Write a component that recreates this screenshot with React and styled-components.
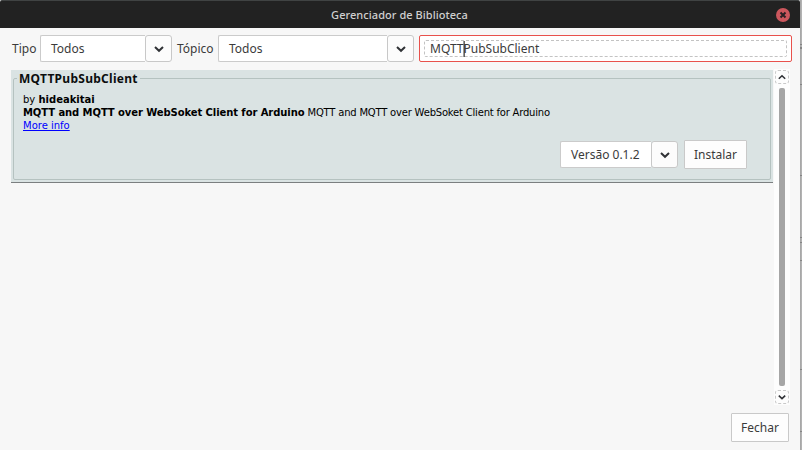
import React from 'react';
import styled, { createGlobalStyle } from 'styled-components';

const GlobalStyle = createGlobalStyle`
  * { box-sizing: border-box; }
  body { margin: 0; overflow: hidden; background: #b4b4b4; }
`;

const Desktop = styled.div`
  display: flex;
  width: 802px;
  height: 450px;
  background: #b4b4b4;
`;

const Backdrop = styled.div`
  display: flex;
  flex-direction: column;
  width: 2px;
  padding-top: 44px;
  background: linear-gradient(90deg, #a2a2a2, #b8b8b8);
`;

const BackdropMark = styled.span`
  height: ${({ $h }) => $h || 1}px;
  margin-bottom: ${({ $gap }) => $gap}px;
  background: #858585;
`;

const Window = styled.main`
  display: flex;
  flex-direction: column;
  width: 800px;
  height: 450px;
  background: #f7f7f7;
  color: #3b3b3b;
  font: 12px/16px "Noto Sans", sans-serif;
`;

const TitleBar = styled.header`
  display: grid;
  grid-template-columns: 28px 1fr 28px;
  align-items: center;
  height: 28px;
  border-top: 1px solid #404343;
  border-radius: 2px 2px 0 0;
  background: #222;
`;

const WindowTitle = styled.h1`
  grid-column: 2;
  margin: 0 1px 0 0;
  text-align: center;
  color: #d0d0d0;
  font-size: 11px;
  font-weight: 500;
  line-height: 16px;
  letter-spacing: 0.05px;
`;

const CloseButton = styled.button`
  display: flex;
  width: 14px;
  height: 14px;
  margin-left: 4px;
  padding: 0;
  border: 0;
  border-radius: 50%;
  background: #cc575d;
`;

const FilterBar = styled.div`
  display: flex;
  align-items: center;
  height: 42px;
  padding: 0 8px 1px 12px;
`;

const Label = styled.label`
  width: ${({ $w }) => $w}px;
  white-space: nowrap;
`;

const Combo = styled.div`
  display: flex;
  width: ${({ $w }) => $w}px;
  height: 27px;
  margin-right: ${({ $gap }) => $gap || 0}px;
`;

const ComboValue = styled.span`
  flex: 1;
  padding: 5px 0 0 10px;
  border: 1px solid #cbcbcb;
  border-right: 0;
  border-radius: 2px 0 0 2px;
  background: #fff;
  white-space: nowrap;
`;

const ComboArrow = styled.button`
  display: flex;
  align-items: center;
  justify-content: center;
  width: 27px;
  padding: 0;
  border: 1px solid #c8c8c8;
  border-radius: 3px;
  background: #fcfcfc;
`;

const SearchBox = styled.div`
  flex: 1;
  height: 27px;
  padding: 4px;
  border: 1px solid #e8514c;
  border-radius: 2px;
  background: #fff;
`;

const SearchText = styled.div`
  display: flex;
  height: 17px;
  padding-left: 5px;
  border: 1px dashed #c3c3c3;
  border-radius: 2px;
  line-height: 15px;
`;

const Caret = styled.span`
  width: 1px;
  height: 16px;
  margin: 0 -1px 0 0;
  background: #000;
  transform: translateX(0.6px);
`;

const Content = styled.section`
  display: flex;
  height: 336px;
  padding: 0 10px 0 11px;
`;

const LibraryList = styled.div`
  width: 762px;
  height: 335px;
`;

const LibraryCard = styled.article`
  height: 113px;
  padding: 0 2px 2px;
  border-bottom: 1px solid #7b7f80;
  background: #dae3e3;
`;

const LibraryFrame = styled.fieldset`
  display: flex;
  flex-direction: column;
  justify-content: space-between;
  min-width: 0;
  height: 110px;
  margin: 0;
  padding: 6px 23px 10px 9px;
  border: 1px solid #b5c2c0;
  border-radius: 2px;
`;

const LibraryName = styled.legend`
  margin-left: -6px;
  padding: 0 2px;
  color: #0b0e0e;
  font-size: 12px;
  font-weight: 700;
  line-height: 17px;
  letter-spacing: 0.27px;
`;

const Description = styled.div`
  color: #000;
  font: 10px/13px "DejaVu Sans", sans-serif;
  white-space: nowrap;

  p { margin: 0; }
  a { color: #00f; text-decoration: underline; }
`;

const Sentence = styled.p`
  letter-spacing: -0.2px;

  b { letter-spacing: -0.08px; }
`;

const Actions = styled.div`
  display: flex;
  align-items: center;
  justify-content: flex-end;
  gap: 6px;
`;

const Button = styled.button`
  width: ${({ $w }) => $w}px;
  height: 29px;
  padding: 1px 0 0;
  border: 1px solid #c9c9c9;
  border-radius: 1px;
  background: #fdfdfd;
  color: #3b3b3b;
  font: inherit;
`;

const ScrollBar = styled.div`
  display: flex;
  flex-direction: column;
  align-items: center;
  width: 16px;
  height: 336px;
  margin: -1px 0 0 1px;
  background: #fdfdfd;
`;

const ScrollButton = styled.button`
  display: flex;
  align-items: center;
  justify-content: center;
  flex: none;
  width: 14px;
  height: 14px;
  margin: 1px 0;
  padding: 0;
  border: 1px dashed #c9c9c9;
  border-radius: 3px;
  background: #fdfdfd;
`;

const ScrollThumb = styled.div`
  flex: none;
  width: 6px;
  height: 298px;
  margin: 3px 0;
  border-radius: 2px;
  background: #a6a6a6;
`;

const Footer = styled.footer`
  display: flex;
  justify-content: flex-end;
  padding: 7px 11px 0;
`;

const Chevron = ({ up, small }) => (
  <svg width={small ? 8 : 10} height={small ? 6.4 : 8} viewBox="0 0 10 8" fill="none" stroke="#303236" strokeWidth="2">
    <path d={up ? 'M1 6 5 2.2 9 6' : 'M1 2 5 5.8 9 2'} />
  </svg>
);

const Select = ({ width, gap, children }) => (
  <Combo $w={width} $gap={gap}>
    <ComboValue>{children}</ComboValue>
    <ComboArrow><Chevron /></ComboArrow>
  </Combo>
);

export default function App() {
  return (
    <>
      <GlobalStyle />
      <Desktop>
        <Window>
          <TitleBar>
            <WindowTitle>Gerenciador de Biblioteca</WindowTitle>
            <CloseButton aria-label="Fechar janela">
              <svg width="14" height="14" viewBox="0 0 14 14" stroke="#2b2024" strokeWidth="2">
                <path d="M4.5 4.5 9.5 9.5M9.5 4.5 4.5 9.5" />
              </svg>
            </CloseButton>
          </TitleBar>
          <FilterBar>
            <Label $w={28}>Tipo</Label>
            <Select width={132} gap={5}>Todos</Select>
            <Label $w={41}>Tópico</Label>
            <Select width={196} gap={5}>Todos</Select>
            <SearchBox>
              <SearchText>
                <span>MQTT</span><Caret /><span>PubSubClient</span>
              </SearchText>
            </SearchBox>
          </FilterBar>
          <Content>
            <LibraryList>
              <LibraryCard>
                <LibraryFrame>
                  <LibraryName>MQTTPubSubClient</LibraryName>
                  <Description>
                    <p>by <b>hideakitai</b></p>
                    <Sentence><b>MQTT and MQTT over WebSoket Client for Arduino</b> MQTT and MQTT over WebSoket Client for Arduino</Sentence>
                    <p><a>More info</a></p>
                  </Description>
                  <Actions>
                    <Select width={118}>Versão 0.1.2</Select>
                    <Button $w={63}>Instalar</Button>
                  </Actions>
                </LibraryFrame>
              </LibraryCard>
            </LibraryList>
            <ScrollBar>
              <ScrollButton aria-label="Subir"><Chevron up small /></ScrollButton>
              <ScrollThumb />
              <ScrollButton aria-label="Descer"><Chevron small /></ScrollButton>
            </ScrollBar>
          </Content>
          <Footer><Button $w={58}>Fechar</Button></Footer>
        </Window>
        <Backdrop>
          <BackdropMark $gap={2} />
          <BackdropMark $gap={35} $h={2} />
          <BackdropMark $gap={90} />
          <BackdropMark $gap={61} />
          <BackdropMark $gap={4} $h={1} />
          <BackdropMark $gap={17} />
          <BackdropMark $gap={108} />
          <BackdropMark $gap={61} />
          <BackdropMark $gap={0} />
        </Backdrop>
      </Desktop>
    </>
  );
}
